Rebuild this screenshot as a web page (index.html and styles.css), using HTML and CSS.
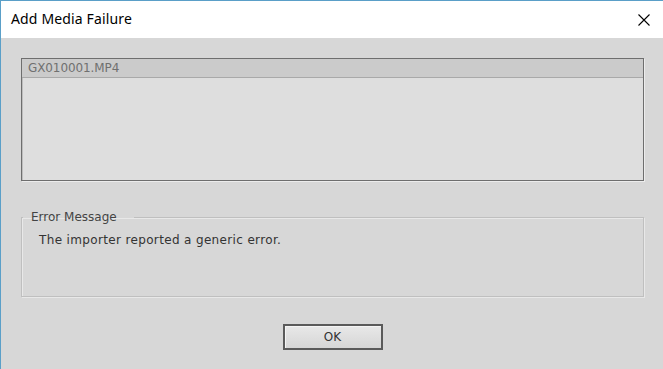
FILE: index.html
```html
<!DOCTYPE html>
<html>
<head>
<meta charset="utf-8">
<link rel="stylesheet" href="styles.css">
</head>
<body>
<div class="window">
  <div class="titlebar">
    <span class="title">Add Media Failure</span>
    <svg class="close" width="12" height="12" viewBox="0 0 12 12"><path d="M0.5 0.5 L11.5 11.5 M11.5 0.5 L0.5 11.5" stroke="#000" stroke-width="1.1" fill="none"/></svg>
  </div>
  <div class="body">
    <div class="listbox">
      <div class="listhead">GX010001.MP4</div>
    </div>
    <fieldset class="group">
      <legend>Error Message</legend>
      <div class="msg">The importer reported a generic error.</div>
    </fieldset>
    <div class="buttons">
      <button class="ok">OK</button>
    </div>
  </div>
</div>
</body>
</html>
```
FILE: styles.css
```css
html, body {
  margin: 0;
  padding: 0;
  width: 663px;
  height: 369px;
  overflow: hidden;
  background: #d7d7d7;
}
.window {
  width: 663px;
  height: 369px;
  box-sizing: border-box;
  border-left: 1px solid #5a9fc8;
  border-top: 1px solid #5a9fc8;
  display: flex;
  flex-direction: column;
  background: #d7d7d7;
}
.titlebar {
  height: 37px;
  background: #ffffff;
  display: flex;
  align-items: center;
  justify-content: space-between;
  padding: 0 13px 0 10px;
  font-family: "Noto Sans", sans-serif;
  font-size: 14px;
  letter-spacing: 0.15px;
  color: #000;
}
.title { position: relative; top: -1px; }
.close { position: relative; top: 0; }
.body {
  flex: 1;
  padding: 20px 19px 0 20px;
  display: flex;
  flex-direction: column;
  font-family: "DejaVu Sans", sans-serif;
  font-size: 12px;
}
.listbox {
  height: 123px;
  box-sizing: border-box;
  border: 1px solid #6e6e6e;
  box-shadow: inset 1px 1px 0 #bdbdbd, 1px 1px 0 #ececec;
  background: #dedede;
}
.listhead {
  height: 19px;
  box-sizing: border-box;
  background: #cbcbcb;
  border-bottom: 1px solid #a9a9a9;
  color: #707070;
  padding: 1px 0 0 6px;
  line-height: 17px;
  letter-spacing: -0.1px;
}
.group {
  margin: 29px 0 0 0;
  padding: 0;
  height: 87px;
  box-sizing: border-box;
  border: 1px solid #bfbfbf;
  box-shadow: 1px 1px 0 #e8e8e8, inset 1px 1px 0 #e8e8e8;
  min-width: 0;
}
.group legend {
  margin-left: 1px;
  padding: 0 17px 0 8px;
  color: #444;
  font-size: 12px;
  letter-spacing: 0;
}
.msg {
  padding: 9px 0 0 17px;
  color: #333;
  letter-spacing: 0.35px;
}
.buttons {
  display: flex;
  justify-content: center;
  padding-top: 27px;
}
.ok {
  width: 100px;
  height: 26px;
  box-sizing: border-box;
  border: 2px solid #5a5a5a;
  background: linear-gradient(#e8e8e8, #d6d6d6);
  box-shadow: inset 1px 1px 0 #f4f4f4;
  font-family: "DejaVu Sans", sans-serif;
  font-size: 12px;
  color: #333;
  padding: 0;
}
```
